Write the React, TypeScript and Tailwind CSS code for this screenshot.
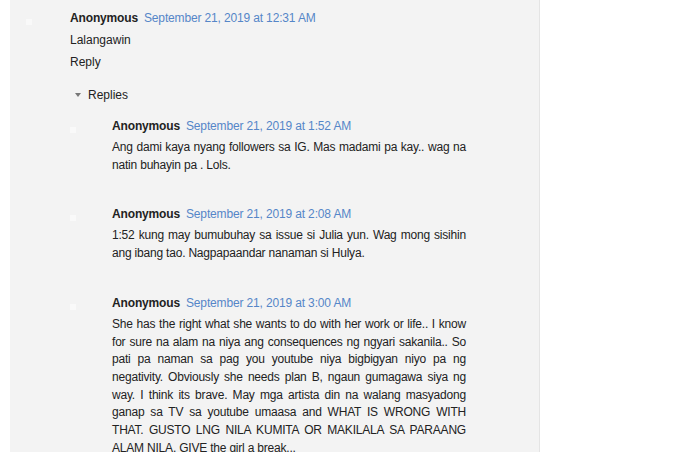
import React from "react";

const font = { fontFamily: '"Liberation Sans", Arial, sans-serif' };

function Avatar() {
  return <div className="w-[6px] h-[6px] bg-white/50 mt-[10px]" />;
}

function Reply({ date, lines, gapTop }: { date: string; lines: string[]; gapTop: string }) {
  return (
    <div className={`flex ${gapTop}`}>
      <div className="w-[42px] shrink-0">
        <Avatar />
      </div>
      <div className="w-[354px]">
        <div className="flex items-baseline gap-[6px] leading-[18px] tracking-[-0.15px]">
          <span className="font-bold text-[#222]">Anonymous</span>
          <span className="text-[#5586c8]">{date}</span>
        </div>
        <div className="mt-[4px] leading-[17.7px] text-[#222] tracking-[-0.2px]">
          {lines.map((l, i) => (
            <div
              key={i}
              className={
                i < lines.length - 1
                  ? "whitespace-nowrap text-justify [text-align-last:justify]"
                  : "whitespace-nowrap"
              }
            >
              {l}
            </div>
          ))}
        </div>
      </div>
    </div>
  );
}

export default function App() {
  return (
    <div className="w-[700px] h-[452px] bg-white overflow-hidden text-[12px]" style={font}>
      <div className="ml-[10px] w-[530px] h-full bg-[#f3f3f3] border-r border-[#e4e4e4] pl-[16px] pt-[9px]">
        <div className="flex">
          <div className="w-[44px] shrink-0">
            <Avatar />
          </div>
          <div>
            <div className="flex items-baseline gap-[6px] leading-[18px] tracking-[-0.15px]">
              <span className="font-bold text-[#222]">Anonymous</span>
              <span className="text-[#5586c8]">September 21, 2019 at 12:31 AM</span>
            </div>
            <div className="mt-[4px] leading-[18px] text-[#222]">Lalangawin</div>
            <div className="mt-[4px] leading-[18px] text-[#222]">Reply</div>
            <div className="mt-[15px] flex items-center leading-[18px] text-[#222] pl-[5px]">
              <svg width="6" height="4" viewBox="0 0 6 4" className="mr-[7px]">
                <polygon points="0,0 6,0 3,4" fill="#777" />
              </svg>
              <span>Replies</span>
            </div>
            <Reply
              gapTop="mt-[13px]"
              date="September 21, 2019 at 1:52 AM"
              lines={[
                "Ang dami kaya nyang followers sa IG. Mas madami pa kay.. wag na",
                "natin buhayin pa . Lols.",
              ]}
            />
            <Reply
              gapTop="mt-[31px]"
              date="September 21, 2019 at 2:08 AM"
              lines={[
                "1:52 kung may bumubuhay sa issue si Julia yun. Wag mong sisihin",
                "ang ibang tao. Nagpapaandar nanaman si Hulya.",
              ]}
            />
            <Reply
              gapTop="mt-[31px]"
              date="September 21, 2019 at 3:00 AM"
              lines={[
                "She has the right what she wants to do with her work or life.. I know",
                "for sure na alam na niya ang consequences ng ngyari sakanila.. So",
                "pati pa naman sa pag you youtube niya bigbigyan niyo pa ng",
                "negativity. Obviously she needs plan B, ngaun gumagawa siya ng",
                "way. I think its brave. May mga artista din na walang masyadong",
                "ganap sa TV sa youtube umaasa and WHAT IS WRONG WITH",
                "THAT. GUSTO LNG NILA KUMITA OR MAKILALA SA PARAANG",
                "ALAM NILA. GIVE the girl a break...",
              ]}
            />
          </div>
        </div>
      </div>
    </div>
  );
}
